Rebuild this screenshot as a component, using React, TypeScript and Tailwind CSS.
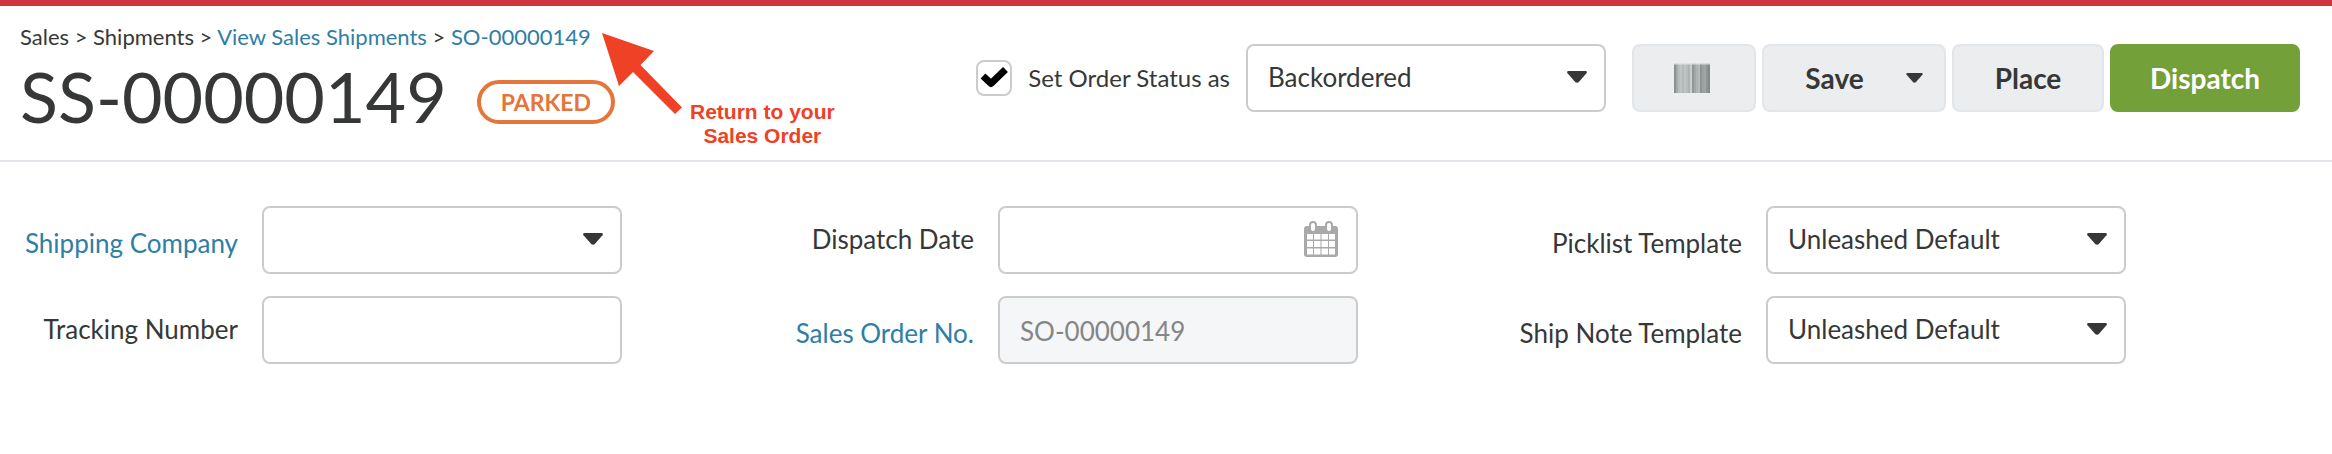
import { useState } from 'react';
import type { ReactNode } from 'react';
import clsx from 'clsx';

const fieldClass = 'h-[68px] w-[360px] rounded-lg border-2 border-[#cbcccc] px-5 text-[26px] text-[#363837] outline-none focus:border-[#2f7ea5]';
const buttonClass = 'flex h-[68px] items-center justify-center rounded-lg border-2 text-[28px] font-bold';
const greyButtonClass = 'border-[#e1e6ea] bg-[#ebedef] text-[#363837] hover:bg-[#e1e6ea]';

function Caret({ className }: { className?: string }) {
    return (
        <svg viewBox="0 0 20 12" className={clsx('fill-[#363837]', className)} aria-hidden="true">
            <path d="M1.6 0h16.8c1.3 0 1.9 1.2 1.1 2.2l-7.7 8.7c-1 1.1-2.6 1.1-3.6 0L.5 2.2C-.3 1.2.3 0 1.6 0z" />
        </svg>
    );
}

function BarcodeIcon() {
    const bars = [
        '#869191', '#a3acac', '#b6bdbd', '#bec4c4', '#b4baba', '#bfc4c4', '#b7bcbc', '#adb2b2', '#c9cdcd',
        '#8f9797', '#a3a7a7', '#aeb2b2', '#b5b9b9', '#8d9495', '#9da1a2', '#a0a4a5', '#8e9595', '#7f8b8a',
    ];
    return (
        <svg viewBox="0 0 36 30" className="h-[30px] w-9" aria-hidden="true">
            {bars.map((color, i) => (
                <rect key={i} x={i * 2} y="0" width="2" height="30" fill={color} />
            ))}
            <rect width="36" height="1" fill="#ebedef" opacity="0.8" />
            <rect y="1" width="36" height="1" fill="#ebedef" opacity="0.4" />
        </svg>
    );
}

function CalendarIcon() {
    return (
        <svg viewBox="0 0 34 36" className="h-9 w-[34px]" aria-hidden="true">
            <rect x="0" y="5" width="34" height="31" rx="3" fill="#a9a9a9" />
            <path d="M3 13h6v5.500H3zM10 13h6.500v5.500H10zM17.500 13H24v5.500h-6.500zM25 13h6v5.500h-6zM3 20h6v6H3zM10 20h6.500v6H10zM17.500 20H24v6h-6.500zM25 20h6v6h-6zM3 27.500h6v6H3zM10 27.500h6.500v6H10zM17.500 27.500H24v6h-6.500zM25 27.500h6v6h-6z" fill="#fff" />
            <rect x="6" y="1" width="6" height="10" rx="3" fill="#fff" stroke="#a9a9a9" strokeWidth="2" />
            <rect x="22" y="1" width="6" height="10" rx="3" fill="#fff" stroke="#a9a9a9" strokeWidth="2" />
        </svg>
    );
}

function Select({ id, options }: { id: string; options: string[] }) {
    return (
        <div className="relative">
            <select id={id} className={clsx(fieldClass, 'block appearance-none bg-white pb-[2px]')}>
                {options.map(o => <option key={o}>{o}</option>)}
            </select>
            <Caret className="pointer-events-none absolute top-[27px] right-[19px] h-3 w-5" />
        </div>
    );
}

function Field({ id, label, href, low, children }: { id: string; label: string; href?: string; low?: boolean; children: ReactNode }) {
    return (
        <div className="flex items-center justify-end gap-6">
            <label htmlFor={id} className={clsx('text-[26px] whitespace-nowrap', low ? 'pt-[6px]' : 'pb-[2px]')}>
                {href ? <a href={href} className="text-[#2f7ea5] hover:underline">{label}</a> : label}
            </label>
            {children}
        </div>
    );
}

export default function App() {
    const [setStatus, setSetStatus] = useState(true);
    const [tracking, setTracking] = useState('');
    const [dispatchDate, setDispatchDate] = useState('');

    return (
        <div className="min-h-screen border-t-6 border-[#d1343f] bg-white font-['Lato','Liberation_Sans',sans-serif] text-[#363837]">
            <header className="flex justify-between border-b-2 border-[#e1e6ea] pr-8 pb-6 pl-5">
                <div className="relative pt-4">
                    <nav className="text-[22px] leading-[30px] whitespace-nowrap">
                        Sales &gt; Shipments &gt; <a href="#shipments" className="text-[#2f7ea5]">View Sales Shipments</a> &gt; <a href="#order" className="text-[#2f7ea5]">SO-00000149</a>
                    </nav>
                    <div className="flex items-center gap-[30px] pt-1">
                        <h1 className="text-[70px] leading-[80px] font-normal">SS-00000149</h1>
                        <span className="mt-3 flex h-11 items-center rounded-full border-4 border-[#e4753b] px-5 text-[23px] font-bold text-[#e4753b]">PARKED</span>
                    </div>

                    {/* Callout */}
                    <div className="absolute top-[27px] left-[582px] flex items-end text-[#ee4125]">
                        <svg viewBox="0 0 80 81" className="h-[81px] w-20" fill="currentColor" aria-hidden="true">
                            <path d="M0 0L52 18 38.500 32 80 74.500 73 81 31 39 17 53z" />
                        </svg>
                        <p className="-mb-[34px] ml-2 text-center font-['Liberation_Sans',sans-serif] text-[21px] leading-6 font-bold whitespace-nowrap">
                            Return to your<br />Sales Order
                        </p>
                    </div>
                </div>

                {/* Actions */}
                <div className="flex items-start gap-[6px] pt-[38px]">
                    <div className="mr-5 flex items-center">
                        <div className="relative mr-4 size-9">
                            <input
                                id="set-status"
                                type="checkbox"
                                checked={setStatus}
                                onChange={e => setSetStatus(e.target.checked)}
                                className="peer block size-9 appearance-none rounded-lg border-2 border-[#cbcccc] bg-white"
                            />
                            <svg viewBox="0 0 28 22" className="pointer-events-none absolute top-[6px] left-1 hidden h-[22px] w-7 peer-checked:block" aria-hidden="true">
                                <path d="M3 10L11 17.500 25.500 3.500" fill="none" stroke="#000" strokeWidth="7" strokeLinejoin="round" />
                            </svg>
                        </div>
                        <label htmlFor="set-status" className="mr-4 text-[24px] whitespace-nowrap">Set Order Status as</label>
                        <Select id="order-status" options={['Backordered', 'Placed', 'Completed']} />
                    </div>
                    <button aria-label="Print barcode" className={clsx(buttonClass, greyButtonClass, 'w-[124px] pr-1')}>
                        <BarcodeIcon />
                    </button>
                    <button className={clsx(buttonClass, greyButtonClass, 'w-[184px] gap-[42px] pl-5')}>
                        Save <Caret className="h-[10px] w-[17px]" />
                    </button>
                    <button className={clsx(buttonClass, greyButtonClass, 'w-[152px]')}>Place</button>
                    <button className={clsx(buttonClass, 'w-[190px] border-[#74a03a] bg-[#74a03a] text-white hover:bg-[#678f33]')}>Dispatch</button>
                </div>
            </header>

            <main className="grid grid-cols-[622fr_736fr_768fr_206fr] pt-11 pb-20">
                <div className="space-y-[22px]">
                    <Field id="company" label="Shipping Company" href="#company" low>
                        <Select id="company" options={['']} />
                    </Field>
                    <Field id="tracking" label="Tracking Number">
                        <input id="tracking" value={tracking} onChange={e => setTracking(e.target.value)} className={clsx(fieldClass, 'bg-white')} />
                    </Field>
                </div>

                <div className="space-y-[22px]">
                    <Field id="dispatch-date" label="Dispatch Date">
                        <div className="relative">
                            <input id="dispatch-date" value={dispatchDate} onChange={e => setDispatchDate(e.target.value)} className={clsx(fieldClass, 'block bg-white pr-16')} />
                            <button aria-label="Choose date" className="absolute top-[15px] right-5">
                                <CalendarIcon />
                            </button>
                        </div>
                    </Field>
                    <Field id="order-no" label="Sales Order No." href="#order" low>
                        <input id="order-no" value="SO-00000149" disabled className={clsx(fieldClass, 'bg-[#f5f6f8] pt-[2px] text-[#848686]')} />
                    </Field>
                </div>

                <div className="space-y-[22px]">
                    <Field id="picklist" label="Picklist Template" low>
                        <Select id="picklist" options={['Unleashed Default']} />
                    </Field>
                    <Field id="ship-note" label="Ship Note Template" low>
                        <Select id="ship-note" options={['Unleashed Default']} />
                    </Field>
                </div>
            </main>
        </div>
    );
}
